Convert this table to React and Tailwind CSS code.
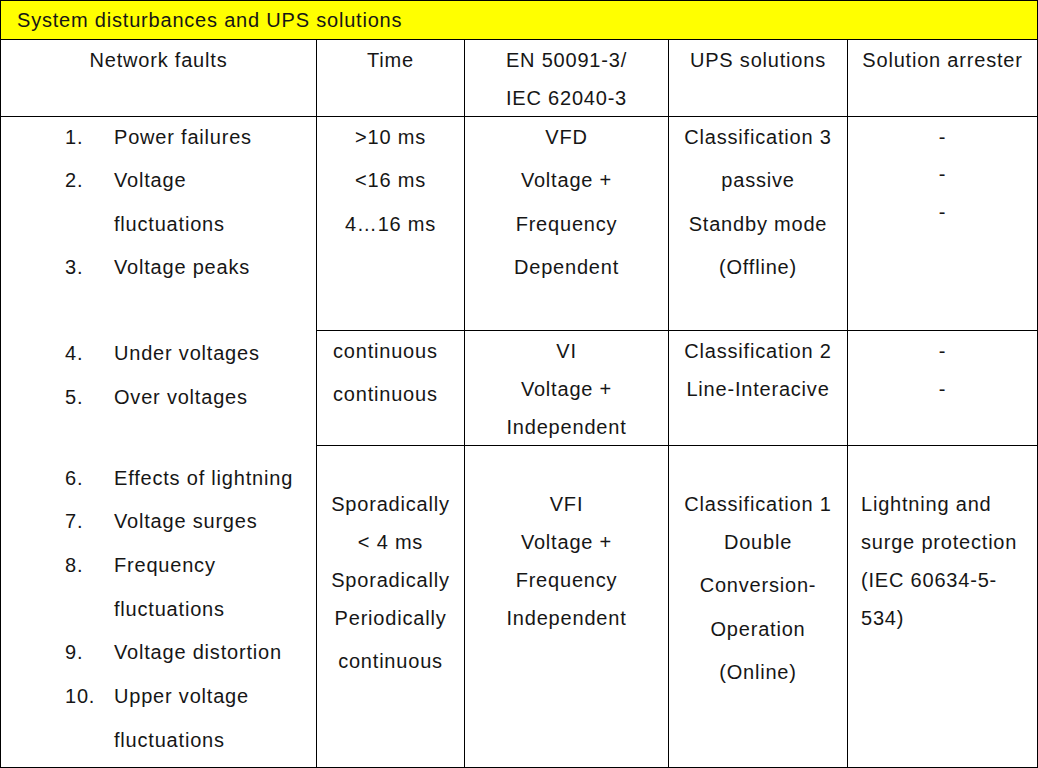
import React from "react";

function Fault({ n, text, cls }) {
  return (
    <div className={"flex whitespace-nowrap " + cls}>
      <span className="w-[49px] shrink-0">{n}</span>
      <span>{text}</span>
    </div>
  );
}

function L({ children, cls }) {
  return <div className={"whitespace-nowrap " + cls}>{children}</div>;
}

const R1 = "h-[43.3px] leading-[43.3px]";
const R3 = "h-[43.7px] leading-[43.7px]";
const S38 = "h-[38px] leading-[38px]";

export default function App() {
  return (
    <div className="w-[1038px] h-[768px] bg-white border-l border-t border-black grid grid-cols-[316px_148px_204px_179px_190px] grid-rows-[39px_77px_214px_115px_322px] font-['Liberation_Sans',Arial,sans-serif] text-[20px] tracking-[0.8px] text-[#161616]">
      {/* Title */}
      <div className="col-span-5 bg-[#ffff00] border-r border-b border-black flex items-center pl-[16px] whitespace-nowrap">
        System disturbances and UPS solutions
      </div>

      {/* Header row */}
      <div className="border-r border-b border-black text-center pt-[1px] leading-[38px]">Network faults</div>
      <div className="border-r border-b border-black text-center pt-[1px] leading-[38px]">Time</div>
      <div className="border-r border-b border-black text-center pt-[1px] leading-[38px]">
        <div>EN 50091-3/</div>
        <div>IEC 62040-3</div>
      </div>
      <div className="border-r border-b border-black text-center pt-[1px] leading-[38px]">UPS solutions</div>
      <div className="border-r border-b border-black text-center pt-[1px] leading-[38px] whitespace-nowrap">Solution arrester</div>

      {/* Network faults column, spans the three body rows */}
      <div className="row-span-3 border-r border-b border-black pl-[64px] flex flex-col">
        <Fault n="1." text="Power failures" cls={R1 + " mt-[-1px]"} />
        <Fault n="2." text="Voltage" cls={R1} />
        <Fault n="" text="fluctuations" cls={R1} />
        <Fault n="3." text="Voltage peaks" cls={R1} />
        <div className={R1} />
        <Fault n="4." text="Under voltages" cls={R1} />
        <Fault n="5." text="Over voltages" cls={R1} />
        <Fault n="6." text="Effects of lightning" cls={R3 + " mt-[37.5px]"} />
        <Fault n="7." text="Voltage surges" cls={R3} />
        <Fault n="8." text="Frequency" cls={R3} />
        <Fault n="" text="fluctuations" cls={R3} />
        <Fault n="9." text="Voltage distortion" cls={R3} />
        <Fault n="10." text="Upper voltage" cls={R3} />
        <Fault n="" text="fluctuations" cls={R3} />
      </div>

      {/* Row 1 */}
      <div className="border-r border-b border-black text-center flex flex-col">
        <L cls={R1 + " mt-[-1px]"}>&gt;10 ms</L>
        <L cls={R1}>&lt;16 ms</L>
        <L cls={R1}>4…16 ms</L>
      </div>
      <div className="border-r border-b border-black text-center flex flex-col">
        <L cls={R1 + " mt-[-1px]"}>VFD</L>
        <L cls={R1}>Voltage +</L>
        <L cls={R1}>Frequency</L>
        <L cls={R1}>Dependent</L>
      </div>
      <div className="border-r border-b border-black text-center flex flex-col">
        <L cls={R1 + " mt-[-1px]"}>Classification 3</L>
        <L cls={R1}>passive</L>
        <L cls={R1}>Standby mode</L>
        <L cls={R1}>(Offline)</L>
      </div>
      <div className="border-r border-b border-black text-center flex flex-col pt-[1.5px]">
        <L cls="h-[37.5px] leading-[37.5px]">-</L>
        <L cls="h-[37.5px] leading-[37.5px]">-</L>
        <L cls="h-[37.5px] leading-[37.5px]">-</L>
      </div>

      {/* Row 2 */}
      <div className="border-r border-b border-black text-left pl-[16px] flex flex-col">
        <L cls="h-[43px] leading-[43px] mt-[-1px]">continuous</L>
        <L cls="h-[43px] leading-[43px]">continuous</L>
      </div>
      <div className="border-r border-b border-black text-center flex flex-col pt-[1px]">
        <L cls={S38}>VI</L>
        <L cls={S38}>Voltage +</L>
        <L cls={S38}>Independent</L>
      </div>
      <div className="border-r border-b border-black text-center flex flex-col pt-[1px]">
        <L cls={S38}>Classification 2</L>
        <L cls={S38}>Line-Interacive</L>
      </div>
      <div className="border-r border-b border-black text-center flex flex-col pt-[1px]">
        <L cls={S38}>-</L>
        <L cls={S38}>-</L>
      </div>

      {/* Row 3 */}
      <div className="border-r border-b border-black text-center flex flex-col pt-[39px]">
        <L cls={S38}>Sporadically</L>
        <L cls={S38}>&lt; 4 ms</L>
        <L cls={S38}>Sporadically</L>
        <L cls={S38}>Periodically</L>
        <L cls={S38 + " mt-[5px]"}>continuous</L>
      </div>
      <div className="border-r border-b border-black text-center flex flex-col pt-[39px]">
        <L cls={S38}>VFI</L>
        <L cls={S38}>Voltage +</L>
        <L cls={S38}>Frequency</L>
        <L cls={S38}>Independent</L>
      </div>
      <div className="border-r border-b border-black text-center flex flex-col pt-[39px]">
        <L cls={S38}>Classification 1</L>
        <L cls={S38}>Double</L>
        <L cls="h-[43.5px] leading-[43.5px] mt-[3px]">Conversion-</L>
        <L cls="h-[43.5px] leading-[43.5px]">Operation</L>
        <L cls="h-[43.5px] leading-[43.5px]">(Online)</L>
      </div>
      <div className="border-r border-b border-black text-left pl-[13px] flex flex-col pt-[39px]">
        <L cls={S38}>Lightning and</L>
        <L cls={S38}>surge protection</L>
        <L cls={S38}>(IEC 60634-5-</L>
        <L cls={S38}>534)</L>
      </div>
    </div>
  );
}
